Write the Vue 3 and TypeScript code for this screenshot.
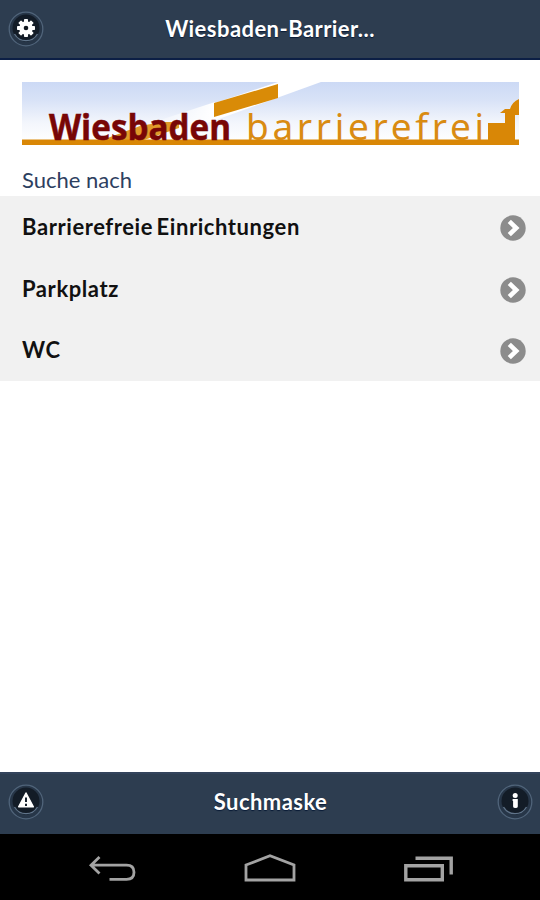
<script setup lang="ts">
interface Entry {
  id: string
  label: string
}

const entries: Entry[] = [
  { id: 'places', label: 'Barrierefreie Einrichtungen' },
  { id: 'parking', label: 'Parkplatz' },
  { id: 'wc', label: 'WC' },
]
const teeth: number[] = [0, 45, 90, 135]
</script>

<template>
  <div class="screen">
    <header class="bar header">
      <button class="round" aria-label="Einstellungen">
        <svg viewBox="0 0 36 38" width="36" height="38">
          <circle class="halo" cx="18" cy="19" r="16.8" />
          <circle class="disc" cx="18" cy="18" r="13.5" />
          <path class="rim" d="M6.5 24A13.2 13.2 0 0 0 29.5 24" />
          <g fill="#fff" transform="translate(18 18)">
            <circle r="6.8" />
            <rect v-for="a in teeth" :key="a" x="-2" y="-9" width="4" height="18" rx=".7" :transform="`rotate(${a})`" />
          </g>
          <circle cx="18" cy="18" r="2.3" fill="#10171f" />
        </svg>
      </button>
      <h1 class="title">Wiesbaden-Barrier...</h1>
      <span class="round"></span>
    </header>

    <main class="content">
      <svg class="banner" viewBox="0 0 497 64" width="497" height="64">
        <defs>
          <linearGradient id="sky" x1="0" y1="0" x2="0" y2="1">
            <stop offset="0" stop-color="#ccd9f5" />
            <stop offset=".3" stop-color="#d8e2f7" />
            <stop offset=".68" stop-color="#f3f6fc" />
            <stop offset="1" stop-color="#fff" />
          </linearGradient>
          <linearGradient id="beam" x1="0" y1="0" x2="1" y2="0">
            <stop offset="0" stop-color="#fff" stop-opacity="0" />
            <stop offset=".4" stop-color="#fff" />
          </linearGradient>
        </defs>
        <rect width="497" height="60" fill="url(#sky)" />
        <path d="M120 44L193 20V21L256 0H299L180 43V58H120Z" fill="url(#beam)" />
        <path d="M192 21L256 2V16L192 35Z" fill="#d98b07" />
        <path d="M80 58L118 44L140 40H157V46L122 58Z" fill="#e09a28" />
        <rect y="57.5" width="497" height="5.5" fill="#d98706" />
        <path d="M466 58V41H483V31L478 31L483 27H488Q490 20 497 17V33H493V58Z" fill="#d98706" />
        <text class="logo-bold" x="27" y="57.5" textLength="182" lengthAdjust="spacingAndGlyphs">Wiesbaden</text>
        <text class="logo-light" x="224" y="58" textLength="238" lengthAdjust="spacing">barrierefrei</text>
      </svg>
      <p class="caption">Suche nach</p>
      <ul class="list">
        <li v-for="entry in entries" :key="entry.id" class="row">
          <span class="label">{{ entry.label }}</span>
          <svg viewBox="0 0 26 26" width="26" height="26">
            <circle cx="13" cy="13" r="12.7" fill="#8c8c8c" />
            <path d="M9.3 6.4L16.2 13L9.3 19.6" fill="none" stroke="#fff" stroke-width="4.6" />
          </svg>
        </li>
      </ul>
    </main>

    <footer class="bar footer">
      <button class="round" aria-label="Warnung">
        <svg viewBox="0 0 36 38" width="36" height="38">
          <circle class="halo" cx="18" cy="19" r="16.8" />
          <circle class="disc" cx="18" cy="18" r="13.5" />
          <path class="rim" d="M6.5 24A13.2 13.2 0 0 0 29.5 24" />
          <path d="M18 10L25.3 23.8H10.7Z" fill="#fff" stroke="#fff" stroke-width="1.5" stroke-linejoin="round" />
          <path d="M18 14.5V19M18 20.8V23" stroke="#17222e" stroke-width="2" />
        </svg>
      </button>
      <h2 class="title">Suchmaske</h2>
      <button class="round" aria-label="Info">
        <svg viewBox="0 0 36 38" width="36" height="38">
          <circle class="halo" cx="18" cy="19" r="16.8" />
          <circle class="disc" cx="18" cy="18" r="13.5" />
          <path class="rim" d="M6.5 24A13.2 13.2 0 0 0 29.5 24" />
          <circle cx="18.2" cy="12.6" r="2.5" fill="#fff" />
          <path d="M15.6 16H20.8V23.5Q20.8 25 18.5 25Q16.1 25 16.1 23.5V18H15.6Z" fill="#fff" />
        </svg>
      </button>
    </footer>

    <nav class="system">
      <svg viewBox="0 0 50 30" width="50" height="30">
        <path d="M12.5 3L4 11.2L12.5 19.5M4 11.2H39.5Q47 11.2 47 18.2Q47 25.3 39.5 25.3H22.5" />
      </svg>
      <svg viewBox="0 0 54 30" width="54" height="30">
        <path d="M3 11L27 1.8L51 11V26H3Z" />
      </svg>
      <svg viewBox="0 0 52 30" width="52" height="30">
        <path class="recent" d="M2.8 11.7H39.3V25.7H2.8ZM12.5 4.3H48.2V20.5" />
      </svg>
    </nav>
  </div>
</template>

<style>
body {
  margin: 0;
  background: #fff;
}
</style>

<style scoped>
.screen {
  display: flex;
  flex-direction: column;
  width: 540px;
  height: 900px;
  overflow: hidden;
  background: #fff;
  font-family: Lato, sans-serif;
}
.bar {
  display: flex;
  justify-content: space-between;
  box-sizing: border-box;
  padding: 0 8px;
  background: #2d3d50;
  color: #fff;
}
.header {
  height: 60px;
  padding-top: 10px;
  border-bottom: 2px solid #0c1f45;
}
.footer {
  height: 62px;
  padding: 9px 7px 0 8px;
  border-top: 2px solid #33435b;
}
.round {
  flex: none;
  width: 36px;
  height: 38px;
  padding: 0;
  border: 0;
  background: none;
}
.round svg {
  display: block;
}
.halo {
  fill: #273648;
  stroke: #50647a;
  stroke-width: 1.3;
}
.disc {
  fill: #131c27;
}
.rim {
  fill: none;
  stroke: #60748a;
  stroke-width: 1.3;
}
.title {
  margin: 0;
  font-size: 22px;
  line-height: 37px;
  font-weight: 700;
  letter-spacing: 0.45px;
  text-shadow: 0 1px 1px #081a35;
}
.content {
  flex: 1;
}
.banner {
  display: block;
  margin: 22px 0 0 22px;
  overflow: visible;
}
.logo-bold {
  font: 700 36px "Open Sans", sans-serif;
  fill: #780606;
  stroke: #780606;
  stroke-width: 0.5;
}
.logo-light {
  font: 400 37px "Noto Sans", sans-serif;
  fill: #d98b12;
}
.caption {
  margin: 0;
  padding: 19px 22px 0;
  height: 31px;
  font-size: 22px;
  line-height: 30px;
  color: #2d405f;
}
.list {
  margin: 0;
  padding: 0;
  list-style: none;
  background: #f1f1f1;
}
.row {
  display: flex;
  align-items: center;
  justify-content: space-between;
  box-sizing: border-box;
  height: 61.7px;
  padding: 2px 14px 0 22px;
  font-size: 22px;
  font-weight: 700;
  color: #111;
}
.label {
  padding-bottom: 3px;
  letter-spacing: 0.58px;
  word-spacing: -2.5px;
}
.system {
  display: flex;
  align-items: flex-start;
  justify-content: space-between;
  box-sizing: border-box;
  height: 66px;
  padding: 20px 85px 0 87px;
  background: #000;
}
.system path {
  fill: none;
  stroke: #a3a3a3;
  stroke-width: 2.8;
}
.system .recent {
  stroke-width: 3.4;
}
</style>
